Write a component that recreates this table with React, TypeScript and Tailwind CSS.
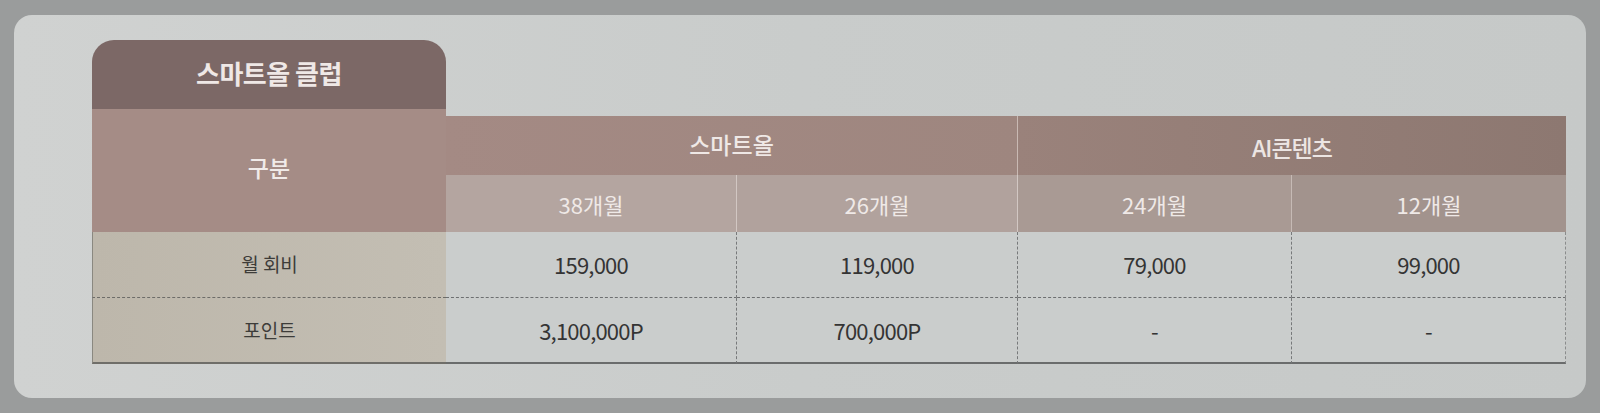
import React from "react";

const font = { fontFamily: '"Noto Sans CJK KR", "Noto Sans", sans-serif' };

type Row = { label: string; values: string[] };

const rows: Row[] = [
  { label: "월 회비", values: ["159,000", "119,000", "79,000", "99,000"] },
  { label: "포인트", values: ["3,100,000P", "700,000P", "-", "-"] },
];

const months = ["38개월", "26개월", "24개월", "12개월"];

export default function App() {
  return (
    <div className="w-[1600px] h-[413px] bg-[#9a9c9c] px-[14px] py-[15px]" style={font}>
      <div className="h-[383px] rounded-[18px] bg-linear-to-r from-[#d0d2d1] via-[#c9cccb] to-[#c6c9c8] pt-[25px] pl-[78px]">
        <div className="grid grid-cols-[354px_291px_281px_274px_274px] grid-rows-[69px_7px_59px_57px_66px_66px]">
          {/* Title tab */}
          <div className="col-start-1 row-start-1 rounded-t-[22px] bg-[#7c6866] flex items-center justify-center pb-[4px]">
            <span className="text-[26px] font-bold text-[#efe8e6] tracking-[-0.5px]">스마트올 클럽</span>
          </div>

          {/* 구분 */}
          <div className="col-start-1 row-start-2 row-span-3 bg-[#a58c86] flex items-center justify-center pb-[6px]">
            <span className="text-[23px] font-medium text-[#f1ebe9]">구분</span>
          </div>

          {/* Group headers */}
          <div className="col-start-2 col-span-2 row-start-3 bg-linear-to-r from-[#a48a84] to-[#9e867f] border-r border-[#c9b9b3] flex items-center justify-center pb-[2px]">
            <span className="text-[23px] font-medium text-[#efe8e6]">스마트올</span>
          </div>
          <div className="col-start-4 col-span-2 row-start-3 bg-linear-to-r from-[#9a827b] to-[#8d7871] flex items-center justify-center pt-[4px]">
            <span className="text-[23px] font-medium text-[#ece5e3] tracking-[-1px]">AI콘텐츠</span>
          </div>

          {/* Month sub headers */}
          {months.map((m, i) => (
            <div
              key={m}
              className={
                "row-start-4 flex items-center justify-center pt-[2px] " +
                (i === 0
                  ? "col-start-2 bg-[#b4a5a0] border-r border-[#d2c7c3]"
                  : i === 1
                  ? "col-start-3 bg-[#b1a29d] border-r border-[#d2c7c3]"
                  : i === 2
                  ? "col-start-4 bg-[#a99a94] border-r border-[#c6bab5]"
                  : "col-start-5 bg-[#a2938d]")
              }
            >
              <span className="text-[22px] text-[#efe9e7]">{m}</span>
            </div>
          ))}

          {/* Data rows */}
          {rows.map((r, ri) => (
            <React.Fragment key={r.label}>
              <div
                className={
                  "col-start-1 flex items-center justify-center bg-linear-to-r from-[#bdb7ab] to-[#c3beb3] border-l border-[#8a8880] " +
                  (ri === 0
                    ? "row-start-5 border-b border-b-[#6d6c68] [border-bottom-style:dashed]"
                    : "row-start-6 border-b-2 border-b-[#6f6e69]")
                }
              >
                <span className="text-[19px] text-[#3d3c39]">{r.label}</span>
              </div>
              {r.values.map((v, ci) => (
                <div
                  key={ci}
                  className={
                    "flex items-center justify-center bg-[#cacdcc] border-r [border-right-style:dashed] " +
                    (ri === 0 ? "row-start-5 " : "row-start-6 ") +
                    (ci === 0
                      ? "col-start-2 border-r-[#77797a] "
                      : ci === 1
                      ? "col-start-3 border-r-[#77797a] "
                      : ci === 2
                      ? "col-start-4 border-r-[#77797a] "
                      : "col-start-5 border-r-[#8a8c8c] ") +
                    (ri === 0
                      ? "border-b border-b-[#6d6f70] [border-bottom-style:dashed]"
                      : "border-b-2 border-b-[#6a6c6c]")
                  }
                >
                  <span className="text-[22px] text-[#343434] tracking-[-0.8px]">{v}</span>
                </div>
              ))}
            </React.Fragment>
          ))}
        </div>
      </div>
    </div>
  );
}
